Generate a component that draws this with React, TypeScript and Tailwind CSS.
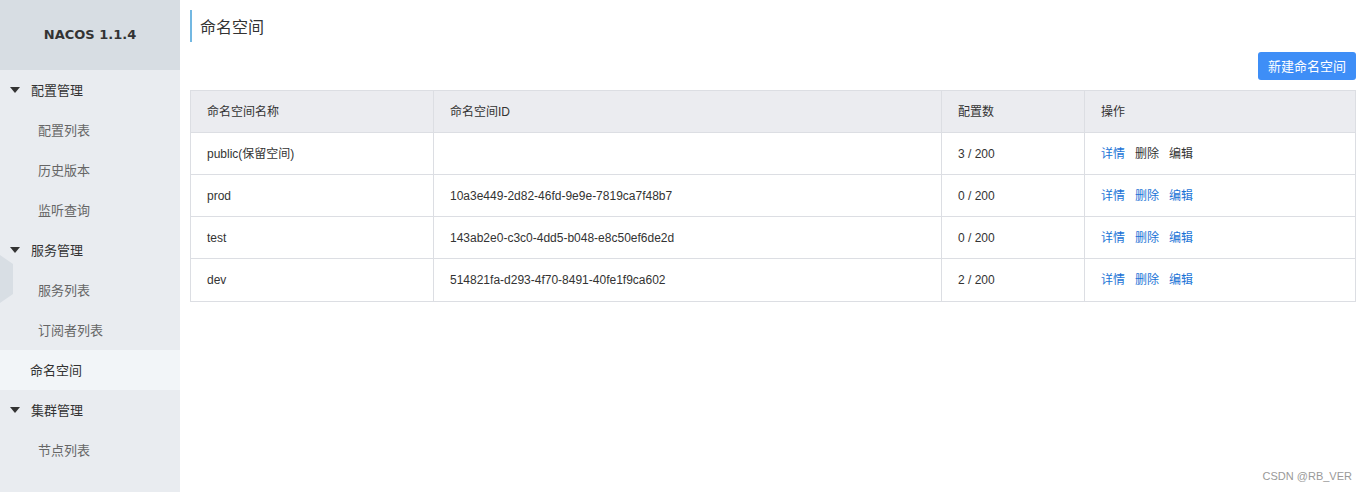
import React from "react";

const font = { fontFamily: '"Noto Sans CJK SC", "Liberation Sans", sans-serif' };
const tableFont = { fontFamily: '"Liberation Sans", "Noto Sans CJK SC", sans-serif' };

function Tri() {
  return (
    <svg width="10" height="6" viewBox="0 0 10 6" className="mr-[11px]">
      <polygon points="0,0 10,0 5,6" fill="#333" />
    </svg>
  );
}

const rows = [
  { name: "public(保留空间)", id: "", count: "3 / 200", disabled: true },
  { name: "prod", id: "10a3e449-2d82-46fd-9e9e-7819ca7f48b7", count: "0 / 200" },
  { name: "test", id: "143ab2e0-c3c0-4dd5-b048-e8c50ef6de2d", count: "0 / 200" },
  { name: "dev", id: "514821fa-d293-4f70-8491-40fe1f9ca602", count: "2 / 200" },
];

export default function App() {
  return (
    <div className="flex h-[492px] w-[1366px] bg-white text-[13px] text-[#333]" style={font}>
      <aside className="relative flex h-full w-[180px] shrink-0 flex-col bg-[#e9ecf0]">
        <div className="flex h-[70px] items-center justify-center bg-[#d7dde3] text-[13px] font-bold text-[#333]" style={{ fontFamily: '"DejaVu Sans", "Liberation Sans", sans-serif' }}>
          NACOS 1.1.4
        </div>
        <svg className="absolute left-0 top-[255px]" width="14" height="48" viewBox="0 0 14 48">
          <polygon points="0,0 13,9 13,39 0,48" fill="#d8dee4" />
        </svg>
        <div className="relative flex h-[40px] items-center pl-[10px] text-[#333]"><Tri />配置管理</div>
        <div className="flex h-[40px] items-center pl-[38px] text-[#666]">配置列表</div>
        <div className="flex h-[40px] items-center pl-[38px] text-[#666]">历史版本</div>
        <div className="flex h-[40px] items-center pl-[38px] text-[#666]">监听查询</div>
        <div className="flex h-[40px] items-center pl-[10px] text-[#333]"><Tri />服务管理</div>
        <div className="relative flex h-[40px] items-center pl-[38px] text-[#666]">服务列表</div>
        <div className="flex h-[40px] items-center pl-[38px] text-[#666]">订阅者列表</div>
        <div className="flex h-[40px] items-center bg-[#f2f5f8] pl-[30px] text-[#333]">命名空间</div>
        <div className="flex h-[40px] items-center pl-[10px] text-[#333]"><Tri />集群管理</div>
        <div className="flex h-[40px] items-center pl-[38px] text-[#666]">节点列表</div>
      </aside>
      <main className="relative flex-1 pl-[10px] pr-[10px]">
        <div className="mt-[10px] flex h-[32px] items-center border-l-[2px] border-[#73b8e2] pl-[8px] text-[16px] text-[#333]">
          命名空间
        </div>
        <div className="mt-[10px] flex justify-end">
          <button className="h-[28px] rounded-[3px] bg-[#3e8ef7] px-[10px] text-[13px] text-white">新建命名空间</button>
        </div>
        <table className="mt-[10px] w-full border-collapse text-[12px] text-[#333]" style={tableFont}>
          <colgroup>
            <col className="w-[243px]" />
            <col className="w-[508px]" />
            <col className="w-[143px]" />
            <col />
          </colgroup>
          <thead>
            <tr className="h-[42px] bg-[#ebecf0]">
              <th className="border border-[#dcdee3] pl-[16px] text-left font-normal">命名空间名称</th>
              <th className="border border-[#dcdee3] pl-[16px] text-left font-normal">命名空间ID</th>
              <th className="border border-[#dcdee3] pl-[16px] text-left font-normal">配置数</th>
              <th className="border border-[#dcdee3] pl-[16px] text-left font-normal">操作</th>
            </tr>
          </thead>
          <tbody>
            {rows.map((r, i) => (
              <tr key={r.name} className={i === rows.length - 1 ? "h-[43px]" : "h-[42px]"}>
                <td className="border border-[#dcdee3] pl-[16px]">{r.name}</td>
                <td className="border border-[#dcdee3] pl-[16px]">{r.id}</td>
                <td className="border border-[#dcdee3] pl-[16px]">{r.count}</td>
                <td className="border border-[#dcdee3] pl-[16px]">
                  <span className="text-[#1a73d6]">详情</span>
                  <span className={`ml-[10px] ${r.disabled ? "text-[#333]" : "text-[#1a73d6]"}`}>删除</span>
                  <span className={`ml-[10px] ${r.disabled ? "text-[#333]" : "text-[#1a73d6]"}`}>编辑</span>
                </td>
              </tr>
            ))}
          </tbody>
        </table>
        <div className="absolute bottom-[8px] right-[14px] text-[11px] text-[#999]" style={{ fontFamily: '"Liberation Sans", sans-serif' }}>
          CSDN @RB_VER
        </div>
      </main>
    </div>
  );
}
